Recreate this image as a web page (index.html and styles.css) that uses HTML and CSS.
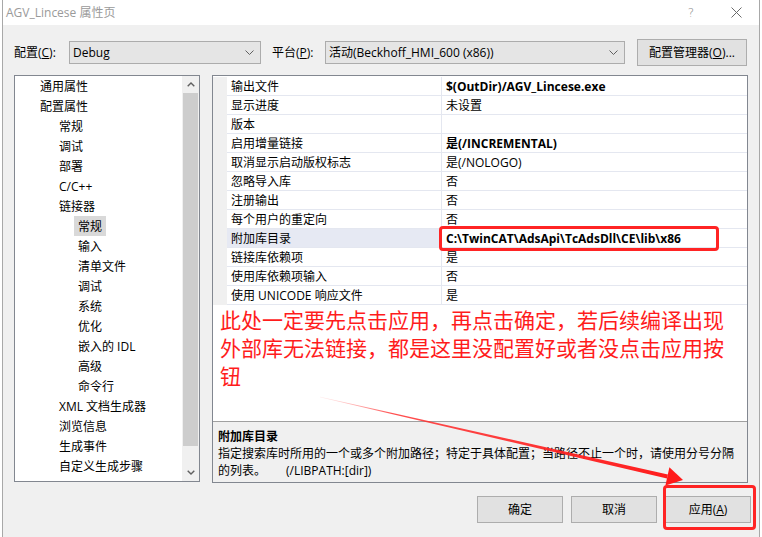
FILE: index.html
```html
<!DOCTYPE html>
<html lang="zh-CN">
<head>
<meta charset="utf-8">
<title>AGV_Lincese 属性页</title>
<link rel="stylesheet" href="styles.css">
</head>
<body>
<div class="dialog">
  <div class="titlebar">
    <span class="title">AGV_Lincese 属性页</span>
    <span class="help">?</span>
    <svg class="close" width="11" height="11" viewBox="0 0 11 11"><path d="M0.5 0.5 L10.5 10.5 M10.5 0.5 L0.5 10.5" stroke="#6a6a6a" stroke-width="1" fill="none"/></svg>
  </div>
  <div class="content">
    <div class="toprow">
      <span class="lbl lbl-config">配置(<u>C</u>):</span>
      <div class="combo combo-config"><span class="combo-text">Debug</span><svg class="chev" width="9" height="5" viewBox="0 0 9 5"><polyline points="0.5,0.5 4.5,4.5 8.5,0.5" fill="none" stroke="#606060" stroke-width="1"/></svg></div>
      <span class="lbl lbl-platform">平台(<u>P</u>):</span>
      <div class="combo combo-platform"><span class="combo-text">活动(Beckhoff_HMI_600 (x86))</span><svg class="chev" width="9" height="5" viewBox="0 0 9 5"><polyline points="0.5,0.5 4.5,4.5 8.5,0.5" fill="none" stroke="#606060" stroke-width="1"/></svg></div>
      <button class="btn btn-manager">配置管理器(<u>O</u>)...</button>
    </div>
    <div class="main">
      <div class="tree">
        <ul class="tree-list">
          <li class="l1"><span>通用属性</span></li>
          <li class="l1"><span>配置属性</span></li>
          <li class="l2"><span>常规</span></li>
          <li class="l2"><span>调试</span></li>
          <li class="l2"><span>部署</span></li>
          <li class="l2"><span>C/C++</span></li>
          <li class="l2"><span>链接器</span></li>
          <li class="l3"><span class="sel">常规</span></li>
          <li class="l3"><span>输入</span></li>
          <li class="l3"><span>清单文件</span></li>
          <li class="l3"><span>调试</span></li>
          <li class="l3"><span>系统</span></li>
          <li class="l3"><span>优化</span></li>
          <li class="l3"><span>嵌入的 IDL</span></li>
          <li class="l3"><span>高级</span></li>
          <li class="l3"><span>命令行</span></li>
          <li class="l2"><span>XML 文档生成器</span></li>
          <li class="l2"><span>浏览信息</span></li>
          <li class="l2"><span>生成事件</span></li>
          <li class="l2"><span>自定义生成步骤</span></li>
        </ul>
        <div class="vscroll">
          <div class="sb-btn"><svg width="8" height="5" viewBox="0 0 8 5"><polyline points="0.7,4.3 4,1 7.3,4.3" fill="none" stroke="#606060" stroke-width="1.4"/></svg></div>
          <div class="sb-thumb"></div>
          <div class="sb-track"></div>
          <div class="sb-btn"><svg width="8" height="5" viewBox="0 0 8 5"><polyline points="0.7,0.7 4,4 7.3,0.7" fill="none" stroke="#606060" stroke-width="1.4"/></svg></div>
        </div>
      </div>
      <div class="props">
        <div class="grid">
          <div class="row"><div class="gutter"></div><div class="name">输出文件</div><div class="value bold">$(OutDir)/AGV_Lincese.exe</div></div>
          <div class="row"><div class="gutter"></div><div class="name">显示进度</div><div class="value">未设置</div></div>
          <div class="row"><div class="gutter"></div><div class="name">版本</div><div class="value"></div></div>
          <div class="row"><div class="gutter"></div><div class="name">启用增量链接</div><div class="value bold">是(/INCREMENTAL)</div></div>
          <div class="row"><div class="gutter"></div><div class="name">取消显示启动版权标志</div><div class="value">是(/NOLOGO)</div></div>
          <div class="row"><div class="gutter"></div><div class="name">忽略导入库</div><div class="value">否</div></div>
          <div class="row"><div class="gutter"></div><div class="name">注册输出</div><div class="value">否</div></div>
          <div class="row"><div class="gutter"></div><div class="name">每个用户的重定向</div><div class="value">否</div></div>
          <div class="row selected"><div class="gutter"></div><div class="name">附加库目录</div><div class="value bold">C:\TwinCAT\AdsApi\TcAdsDll\CE\lib\x86</div></div>
          <div class="row"><div class="gutter"></div><div class="name">链接库依赖项</div><div class="value">是</div></div>
          <div class="row"><div class="gutter"></div><div class="name">使用库依赖项输入</div><div class="value">否</div></div>
          <div class="row"><div class="gutter"></div><div class="name">使用 UNICODE 响应文件</div><div class="value">是</div></div>
          <div class="note">此处一定要先点击应用，再点击确定，若后续编译出现<br>外部库无法链接，都是这里没配置好或者没点击应用按<br>钮</div>
        </div>
        <div class="desc">
          <div class="desc-title">附加库目录</div>
          <div class="desc-text">指定搜索库时所用的一个或多个附加路径；特定于具体配置；当路径不止一个时，请使用分号分隔</div>
          <div class="desc-text">的列表。<span class="switch">(/LIBPATH:[dir])</span></div>
        </div>
      </div>
    </div>
    <div class="buttons">
      <button class="btn btn-dlg">确定</button>
      <button class="btn btn-dlg">取消</button>
      <button class="btn btn-dlg">应用(<u>A</u>)</button>
    </div>
  </div>
</div>
<div class="mark mark-path"></div>
<div class="mark mark-apply"></div>
<svg class="arrow" width="762" height="537" viewBox="0 0 762 537">
  <defs>
    <linearGradient id="shaft" gradientUnits="userSpaceOnUse" x1="320" y1="397" x2="683" y2="480">
      <stop offset="0" stop-color="#ff8080" stop-opacity="0.15"/>
      <stop offset="0.2" stop-color="#ff3030" stop-opacity="0.85"/>
      <stop offset="1" stop-color="#ff1a1a" stop-opacity="1"/>
    </linearGradient>
  </defs>
  <polygon points="320,396.7 667.9,474.4 667.0,478.4 320,397.3" fill="url(#shaft)"/>
  <polygon points="683,480 669.4,467.2 665.4,485.6" fill="#ff1a1a"/>
</svg>
</body>
</html>
```

FILE: styles.css
```css
html, body {
  margin: 0;
  padding: 0;
}
body {
  width: 762px;
  height: 537px;
  overflow: hidden;
  position: relative;
  background: #ffffff;
  font-family: "Open Sans", "Noto Sans CJK SC", sans-serif;
  font-size: 12px;
  color: #000;
}
.dialog {
  margin-left: 2px;
  width: 758px;
  height: 537px;
  box-sizing: border-box;
  border-left: 1px solid #a8a8a8;
  border-right: 1px solid #a8a8a8;
  display: flex;
  flex-direction: column;
  background: #f0f0f0;
}
.titlebar {
  height: 25px;
  flex: none;
  background: #fff;
  display: flex;
  align-items: center;
  padding-left: 3px;
}
.title {
  color: #9a9a9a;
  line-height: 16px;
  padding-top: 1px;
}
.help {
  margin-left: auto;
  color: #8a8a8a;
  font-size: 12px;
  line-height: 12px;
  font-family: "DejaVu Sans", sans-serif;
  font-weight: 300;
}
.close {
  margin-left: 37px;
  margin-right: 17px;
}
.content {
  flex: 1;
  display: flex;
  flex-direction: column;
}
.toprow {
  display: flex;
  align-items: center;
  height: 27px;
  margin-top: 14px;
  padding-left: 11px;
}
.lbl {
  line-height: 16px;
  padding-top: 1px;
  white-space: nowrap;
}
.lbl-config { width: 55px; }
.lbl-platform { width: 53px; }
.combo {
  height: 23px;
  box-sizing: border-box;
  display: flex;
  align-items: center;
  background: #e5e5e5;
  border: 1px solid #acacac;
  padding-left: 3px;
  padding-right: 6px;
}
.combo-text { line-height: 16px; padding-top: 1px; white-space: nowrap; }
.chev { margin-left: auto; }
.combo-config { width: 192px; margin-right: 11px; }
.combo-platform { width: 300px; margin-right: 12px; }
.btn {
  font-family: inherit;
  font-size: 12px;
  color: #000;
  background: #e1e1e1;
  border: 1px solid #adadad;
  padding: 1px 0 0 0;
  margin: 0;
  line-height: 16px;
}
.btn-manager { width: 110px; height: 27px; }
.main {
  display: flex;
  gap: 12px;
  padding-left: 11px;
  margin-top: 9px;
}
.tree {
  width: 186px;
  height: 407px;
  box-sizing: border-box;
  border: 1px solid #828790;
  background: #fff;
  display: flex;
}
.tree-list {
  flex: 1;
  margin: 0;
  padding: 0;
  list-style: none;
}
.tree-list li {
  height: 20px;
  white-space: nowrap;
}
.tree-list li span {
  display: inline-block;
  box-sizing: border-box;
  padding: 1px 4px 0 4px;
  height: 20px;
  line-height: 19px;
}
.tree-list .l1 { padding-left: 21px; }
.tree-list .l2 { padding-left: 40px; }
.tree-list .l3 { padding-left: 59px; }
.tree-list .sel { background: #d9d9d9; }
.vscroll {
  width: 17px;
  flex: none;
  background: #f0f0f0;
  display: flex;
  flex-direction: column;
}
.sb-btn {
  height: 17px;
  display: flex;
  align-items: center;
  justify-content: center;
}
.sb-thumb {
  height: 353px;
  margin: 0 1px;
  background: #cdcdcd;
}
.sb-track { height: 18px; }
.props {
  width: 536px;
  height: 408px;
  box-sizing: border-box;
  border: 1px solid #828790;
  background: #fff;
  display: flex;
  flex-direction: column;
}
.grid {
  flex: 1;
  padding-top: 1px;
}
.row {
  display: grid;
  grid-template-columns: 14px 215px 1fr;
  height: 19px;
}
.gutter { background: #f0f0f0; }
.name, .value {
  border-bottom: 1px solid #e4e7f0;
  line-height: 17px;
  padding-top: 1px;
  padding-left: 4px;
  white-space: nowrap;
  overflow: hidden;
}
.name { border-right: 1px solid #e4e7f0; }
.bold { font-weight: 700; }
.row.selected .name { background: #e6e9f3; }
.note {
  color: #ff1c1c;
  font-family: "Noto Sans CJK SC", sans-serif;
  font-size: 21px;
  line-height: 28px;
  padding-left: 7px;
  white-space: nowrap;
}
.desc {
  height: 61px;
  flex: none;
  box-sizing: border-box;
  border-top: 1px solid #a0a0a0;
  background: #f0f0f0;
  padding: 6px 0 0 5px;
}
.desc-title {
  font-weight: 700;
  line-height: 17px;
}
.desc-text {
  line-height: 17px;
  white-space: nowrap;
}
.switch { margin-left: 20px; }
.buttons {
  display: flex;
  justify-content: flex-end;
  gap: 8px;
  margin-top: 13px;
  padding-right: 8px;
}
.btn-dlg { width: 86px; height: 27px; }
.mark {
  position: absolute;
  box-sizing: border-box;
  border: 3px solid #ff2424;
  border-radius: 4px;
}
.mark-path { left: 439px; top: 226px; width: 280px; height: 25px; }
.mark-apply { left: 663px; top: 485px; width: 93px; height: 45px; }
.arrow {
  position: absolute;
  left: 0;
  top: 0;
  pointer-events: none;
}
```
